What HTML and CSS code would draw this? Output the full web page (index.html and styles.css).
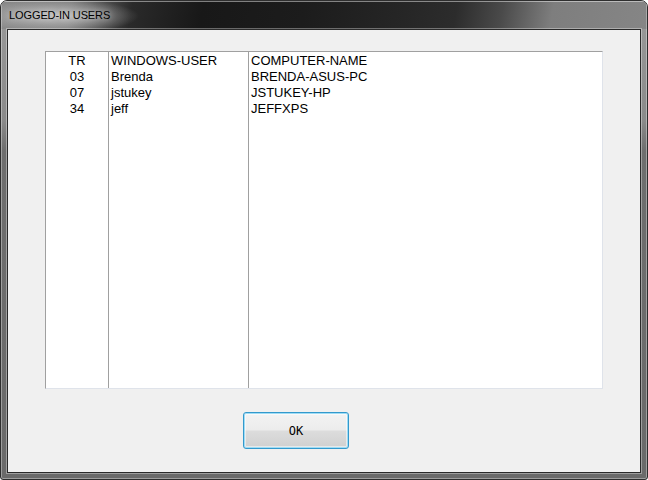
FILE: index.html
```html
<!DOCTYPE html>
<html>
<head>
<meta charset="utf-8">
<link rel="stylesheet" href="styles.css">
</head>
<body>
<div class="window">
  <div class="titlebar"><span class="title">LOGGED-IN USERS</span></div>
  <div class="frame">
    <div class="client">
      <div class="list">
        <div class="col col-tr">
          <div class="cell">TR</div>
          <div class="cell">03</div>
          <div class="cell">07</div>
          <div class="cell">34</div>
        </div>
        <div class="col col-user">
          <div class="cell">WINDOWS-USER</div>
          <div class="cell">Brenda</div>
          <div class="cell">jstukey</div>
          <div class="cell">jeff</div>
        </div>
        <div class="col col-comp">
          <div class="cell">COMPUTER-NAME</div>
          <div class="cell">BRENDA-ASUS-PC</div>
          <div class="cell">JSTUKEY-HP</div>
          <div class="cell">JEFFXPS</div>
        </div>
      </div>
      <div class="actions">
        <button class="ok">OK</button>
      </div>
    </div>
  </div>
</div>
</body>
</html>
```
FILE: styles.css
```css
html, body {
  margin: 0;
  padding: 0;
  background: #ffffff;
}
.window {
  width: 648px;
  height: 480px;
  box-sizing: border-box;
  border: 1px solid #2e2e2e;
  border-radius: 7px 7px 3px 3px;
  overflow: hidden;
  display: flex;
  flex-direction: column;
  background: linear-gradient(180deg, #9a9a9a 0px, #8a8a8a 120px, #6e6e6e 150px, #6a6a6a 480px);
  box-shadow: inset 0 0 0 1px rgba(255,255,255,0.35);
}
.titlebar {
  height: 28px;
  flex: none;
  display: flex;
  align-items: center;
  padding-left: 8px;
  background:
    radial-gradient(ellipse 80px 17px at 58px 15px, rgba(200,200,200,0.85), rgba(200,200,200,0) 100%),
    linear-gradient(100deg, #8a8a8a 0px, #7a7a7a 70px, #2a2a2a 130px, #181818 200px, #1c1c1c 300px, #262626 400px, #2c2c2c 450px, #4a4a4a 495px, #7e7e7e 545px, #868686 648px);
  box-shadow: inset 0 1px 0 rgba(255,255,255,0.45), inset 1px 0 0 rgba(255,255,255,0.3), inset -1px 0 0 rgba(255,255,255,0.3);
}
.title {
  font-family: "Liberation Sans", Arial, sans-serif;
  font-size: 11px;
  letter-spacing: -0.1px;
  color: #000;
  text-shadow: 0 0 6px rgba(255,255,255,0.7);
}
.frame {
  flex: 1;
  display: flex;
  padding: 0 6px 6px 6px;
}
.client {
  flex: 1;
  background: #f0f0f0;
  border: 1px solid #2a2a2a;
  box-shadow: 0 0 0 1px rgba(255,255,255,0.35);
  display: flex;
  flex-direction: column;
}
.list {
  margin: 21px 0 0 37px;
  width: 558px;
  height: 338px;
  box-sizing: border-box;
  background: #ffffff;
  border-top: 1px solid #a0a0a0;
  border-left: 1px solid #a0a0a0;
  border-right: 1px solid #dfe3ea;
  border-bottom: 1px solid #dfe3ea;
  display: flex;
  font-family: "Liberation Sans", Arial, sans-serif;
  font-size: 13px;
  color: #000;
}
.col {
  padding-top: 1px;
}
.col-tr {
  width: 62px;
  text-align: center;
}
.col-user {
  border-left: 1px solid #a0a0a0;
  padding-left: 2px;
  width: 137px;
}
.col-comp {
  flex: 1;
  border-left: 1px solid #a0a0a0;
  padding-left: 2px;
}
.cell {
  height: 16px;
  line-height: 16px;
  white-space: nowrap;
}
.actions {
  display: flex;
  margin-top: 23px;
  padding-left: 235px;
}
.ok {
  width: 106px;
  height: 37px;
  box-sizing: border-box;
  border: 1px solid #3399cc;
  border-radius: 3px;
  background: linear-gradient(180deg, #f3f3f3 0%, #ececec 48%, #dcdcdc 52%, #d0d0d0 100%);
  box-shadow: inset 0 0 0 1px #9fdcf5, inset 0 0 0 2px rgba(255,255,255,0.5);
  font-family: "DejaVu Sans Mono", monospace;
  font-size: 12px;
  color: #000;
  padding: 0;
  margin: 0;
}
```
